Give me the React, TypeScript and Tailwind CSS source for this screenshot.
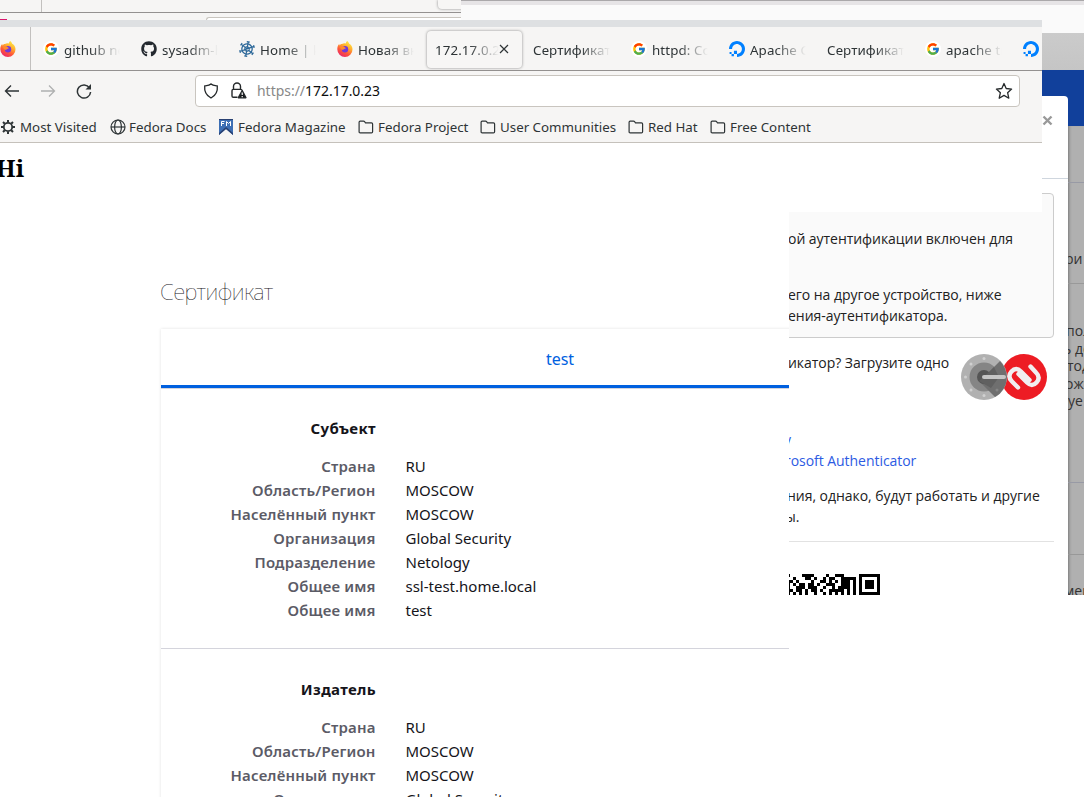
import React from 'react';
import { FaGithub } from 'react-icons/fa';
import { FcGoogle } from 'react-icons/fc';
import { SiDigitalocean } from 'react-icons/si';

const uiFont = "font-['Noto_Sans',sans-serif]";
const webFont = "font-['Open_Sans',sans-serif]";

function FirefoxIcon() {
  return (
    <svg width="16" height="16" viewBox="0 0 16 16" className="shrink-0">
      <defs>
        <linearGradient id="fx" x1="0.8" y1="0" x2="0.25" y2="1">
          <stop offset="0" stopColor="#fff04a" />
          <stop offset="0.35" stopColor="#ffb02e" />
          <stop offset="0.65" stopColor="#ff5a36" />
          <stop offset="1" stopColor="#e8206f" />
        </linearGradient>
      </defs>
      <path fill="url(#fx)" d="M10.3 0c1.2 1 1.6 1.9 1.9 2.8 1 .3 1.6 1 1.9 1.4.9 1.2 1.400 2.600 1.400 4.200A7.600 7.600 0 0 1 8 16 7.700 7.700 0 0 1 .3 8.300c0-2.100.6-3.800 1.900-5.200l.5 1.300C3.500 3.300 4.200 3 5 3.100c1.100-.9 2.600-1 3.900-.6C8.900 1.500 9.400.6 10.300 0z" />
      <circle cx="8" cy="8.300" r="3.200" fill="#7139d8" />
      <path fill="#ff8a2b" d="M3 5.500c1.500-.8 3.500-.4 4.500.6L9 7.200 7.200 8C6.500 9 5.500 8.400 5 8.900 4 8.400 3 7 3 5.500z" />
    </svg>
  );
}

function GoogleIcon() {
  return (
    <span className="flex size-4 shrink-0 items-center justify-center rounded-full bg-white">
      <FcGoogle size={14} />
    </span>
  );
}

function WheelIcon() {
  return (
    <svg width="16" height="16" viewBox="0 0 16 16" className="shrink-0" fill="none" stroke="#2d6899">
      <g transform="rotate(10 8 8)">
        <circle cx="8" cy="8" r="5.200" strokeWidth="1.300" />
        <circle cx="8" cy="8" r="2.300" strokeWidth="1" />
        <path strokeWidth="1.200" d="M8 .5v15M1.500 4.200l13 7.500M14.500 4.200l-13 7.500M6.500.8h3M6.500 15.200h3M1 5.500l1.200-2.500M15 5.500l-1.200-2.500M1 10.500l1.200 2.500M15 10.500l-1.200 2.500" />
      </g>
    </svg>
  );
}

function Folder() {
  return (
    <svg width="16" height="16" viewBox="0 0 16 16" className="shrink-0" fill="none" stroke="#2e3436" strokeWidth="1.200">
      <path d="M1.100 12.800V3.200q0-1.100 1.100-1.100h3.300q.7 0 1.100.6l.9 1.200h6q1.100 0 1.100 1.100v7.800q0 1.100-1.100 1.100H2.200q-1.100 0-1.100-1.100z" />
    </svg>
  );
}

type TabProps = { icon?: React.ReactNode; title: string };
function Tab({ icon, title }: TabProps) {
  return (
    <div className="flex h-10 w-[77px] shrink-0 items-center gap-[5px]">
      {icon}
      <span className="min-w-0 flex-1 overflow-hidden whitespace-nowrap pt-[3px] tracking-[0.1px] [mask-image:linear-gradient(to_left,transparent,black_30px)]">{title}</span>
    </div>
  );
}

function BrowserWindow() {
  return (
    <section className={`absolute left-0 top-5 flex h-[192px] w-[1042px] flex-col overflow-hidden bg-white text-[13.330px] text-[#2e3436] ${uiFont}`}>
      <div className="h-[7px] shrink-0 bg-[#dee0e2]" />
      <div className="flex h-11 shrink-0 border-b border-[#949190] bg-[#f6f5f4]">
        <div className="flex h-full w-[31px] shrink-0 items-center border-r border-[#c2c0be]"><FirefoxIcon /></div>
        <div className="flex min-w-0 items-center pt-[1px]">
          <div className="flex gap-[21px] pl-3">
            <Tab icon={<GoogleIcon />} title="github new" />
            <Tab icon={<FaGithub size={16} className="shrink-0 text-[#24292f]" />} title="sysadm-hw" />
            <Tab icon={<WheelIcon />} title="Home | kub" />
            <Tab icon={<FirefoxIcon />} title="Новая вкладка" />
          </div>
          <div className="ml-[13px] flex h-[37px] w-[95px] shrink-0 items-center rounded bg-[#f7f6f5] pl-[8px] shadow-[0_0_3px_#888]">
            <span className="w-[64px] overflow-hidden whitespace-nowrap pt-[3px] tracking-[0.1px] [mask-image:linear-gradient(to_left,transparent,black_30px)]">172.17.0.23/</span>
            <svg width="12" height="12" viewBox="0 0 12 12" className="-ml-px" stroke="#2e3436" strokeWidth="1.200"><path d="m2 2 8 8M10 2l-8 8" /></svg>
          </div>
          <div className="flex items-center gap-[21px] pl-[11px]">
            <Tab title="Сертификат д" />
            <Tab icon={<GoogleIcon />} title="httpd: Could" />
            <Tab icon={<SiDigitalocean size={16} className="shrink-0 text-[#0080ff]" />} title="Apache Con" />
            <Tab title="Сертификат д" />
            <Tab icon={<GoogleIcon />} title="apache trust" />
            <SiDigitalocean size={16} className="shrink-0 text-[#0080ff]" />
          </div>
        </div>
      </div>
      <div className="flex h-[72px] shrink-0 flex-col border-b border-[#c5c1bb] bg-[#f6f5f4]">
        <div className="flex h-10 items-center">
          <div className="flex w-[195px] shrink-0 gap-5 pl-1 pt-[1px]">
            <svg width="16" height="16" viewBox="0 0 16 16" fill="none" stroke="#2e3436" strokeWidth="1.400"><path d="M15 8H1.500M7 2.500 1.500 8 7 13.500" /></svg>
            <svg width="16" height="16" viewBox="0 0 16 16" fill="none" stroke="#afb0b0" strokeWidth="1.300"><path d="M1 8h13.500M9 2.500 14.500 8 9 13.500" /></svg>
            <svg width="16" height="16" viewBox="0 0 16 16" fill="none" stroke="#2e3436" strokeWidth="1.500"><path d="M13.500 4.800A6.600 6.600 0 1 0 14.600 9" /><path fill="#2e3436" stroke="none" d="M15 1v5.500H9.500z" /></svg>
          </div>
          <div className="flex h-8 w-[825px] items-center rounded border border-[#c9c5bf] bg-white px-[7px]">
            <svg width="16" height="16" viewBox="0 0 16 16" fill="none" stroke="#25292b" strokeWidth="1.300"><path d="M8 1C6.500 2.500 3.800 2.700 1.700 3c-.5 5 1.200 9.300 6.300 12 5.100-2.700 6.800-7 6.300-12C12.200 2.700 9.500 2.500 8 1z" /></svg>
            <svg width="17" height="17" viewBox="0 0 17 17" className="ml-[11px]" fill="none" stroke="#25292b" strokeWidth="1.400"><path d="M7.500 15.300H3.300q-1.300 0-1.300-1.300V8.700q0-1.300 1.300-1.300h7.400q1.300 0 1.300 1M3.500 7V4.500a3.500 3.500 0 0 1 7 0V7" /><path fill="#15181a" strokeWidth="1.400" strokeLinejoin="round" d="m12.200 8.700 3.700 7H8.400z" /><path stroke="#fff" strokeWidth="1.200" d="M12.200 10.500v2.500M12.200 14v1.200" /></svg>
            <span className="pl-[10px] pt-[1px] text-[13.950px] text-[#888]">https://<span className="text-[#0c0d0e]">172.17.0.23</span></span>
            <svg width="18" height="18" viewBox="0 0 18 18" className="ml-auto -mr-[1px]" fill="none" stroke="#25292b" strokeWidth="1.300" strokeLinejoin="round"><path d="m9 1.500 2.200 5 5.400.6-4 3.600 1.200 5.500L9 13.400l-4.800 2.800 1.200-5.500-4-3.600 5.400-.6z" /></svg>
          </div>
        </div>
        <div className="flex h-8 shrink-0 items-center whitespace-nowrap pt-px leading-4">
          <svg width="16" height="16" viewBox="0 0 16 16" className="mr-1 shrink-0" fill="none" stroke="#2e3436"><circle cx="8" cy="8" r="4.200" strokeWidth="1.800" /><path strokeWidth="2" d="M8 1v2.500M8 12.500V15M1 8h2.500M12.500 8H15M3 3l1.800 1.800M11.200 11.200 13 13M13 3l-1.800 1.800M4.800 11.200 3 13" /></svg>
          <span className="w-[90px]">Most Visited</span>
          <svg width="16" height="16" viewBox="0 0 16 16" className="mr-[3px] shrink-0" fill="none" stroke="#2e3436" strokeWidth="1.200"><circle cx="8" cy="8" r="7" /><ellipse cx="8" cy="8" rx="3.400" ry="7" /><path d="M1 8h14" /></svg>
          <span className="w-[89px]">Fedora Docs</span>
          <svg width="16" height="16" viewBox="0 0 16 16" className="mr-1 shrink-0"><path fill="#3c6eb4" d="M1 0h14v16l-7-6-7 6z" /><path fill="#294172" d="M1 0h14v1H1zM1 16v-2l7-6 7 6v2l-7-6z" /><path fill="none" stroke="#fff" d="M3.500 7V2.500h3M3.500 4.500h2.500M8.500 7V2.500l2 2 2-2V7" /></svg>
          <span className="w-[120px]">Fedora Magazine</span>
          <Folder /><span className="ml-1 w-[102px]">Fedora Project</span>
          <Folder /><span className="ml-1 w-[128px]">User Communities</span>
          <Folder /><span className="ml-1 w-[62px]">Red Hat</span>
          <Folder /><span className="ml-1">Free Content</span>
        </div>
      </div>
      <h1 className="-ml-[4px] mt-[8px] font-['Noto_Serif','Liberation_Serif',serif] text-[24px] font-bold leading-[33px] text-black">Hi</h1>
    </section>
  );
}

const subject: [string, string][] = [
  ['Страна', 'RU'],
  ['Область/Регион', 'MOSCOW'],
  ['Населённый пункт', 'MOSCOW'],
  ['Организация', 'Global Security'],
  ['Подразделение', 'Netology'],
  ['Общее имя', 'ssl-test.home.local'],
  ['Общее имя', 'test'],
];

function Group({ title, rows }: { title: string; rows: [string, string][] }) {
  return (
    <div className="shrink-0 border-b border-[#d4d4dc] pb-[26px] pt-[28px]">
      <h2 className="mb-[14px] w-[215px] text-right font-bold leading-6 tracking-[0.35px] text-[#15141a]">{title}</h2>
      {rows.map(([label, value], i) => (
        <div key={i} className="flex h-6 leading-6">
          <span className="w-[214.600px] shrink-0 text-right font-semibold tracking-[0.16px] text-[#5b5b66]">{label}</span>
          <span className="ml-[29.900px] text-[#15141a]">{value}</span>
        </div>
      ))}
    </div>
  );
}

function CertificateWindow() {
  return (
    <section className={`absolute left-0 top-[212px] flex h-[585px] w-[789px] flex-col overflow-hidden bg-white pl-[161px] text-[15px] ${uiFont}`}>
      <h1 className="-ml-px mt-[61px] h-9 shrink-0 text-[22px] font-[100] leading-9 tracking-[-0.45px] text-[#15141a]">Сертификат</h1>
      <div className="mt-[20px] flex w-[798px] shrink-0 flex-col shadow-[0_0_3px_rgba(0,0,0,0.12)]">
        <div className="flex h-[59px] w-full shrink-0 items-center justify-center border-b-[3px] border-[#0060df] pt-[3px] text-[16px] text-[#0061e0]">test</div>
        <div className="h-px bg-[#d4d4dc]" />
        <div className="-mt-px"><Group title="Субъект" rows={subject} /></div>
        <Group title="Издатель" rows={subject} />
      </div>
    </section>
  );
}

function BackWindow() {
  return (
    <section className="absolute left-0 top-0 flex h-5 w-[461px] flex-col overflow-hidden bg-[#f6f5f4]">
      <div className="flex h-[13px] shrink-0 border-b border-[#949190]">
        <div className="w-[42px] shrink-0 border-r border-[#c2c0be]" />
        <div className="ml-[396px] h-[9px] w-10 shrink-0 rounded-b bg-[#f7f6f5] shadow-[0_0_3px_#888]" />
      </div>
      <div className="flex h-[7px] shrink-0 items-end justify-between">
        <div className="h-px w-[7px] bg-[#d9186c]" />
        <div className="h-[3px] w-[255px] rounded-tl border-l border-t border-[#c9c5bf] bg-white" />
      </div>
    </section>
  );
}

const qrCells = [
  '....1111....1..111....',
  '.1...11.1..1.11..11111',
  '1.1....1..11.1.1.111.1',
  '.1.11.11.1..111..111.1',
  '..111.111..1..1.1111.1',
  '1.11.1.11.1..11111.1.1',
  '.1.1.1..1..1.1.1.1.1.1',
];

function QrCode() {
  return (
    <svg width="91" height="21" viewBox="0 0 91 21" className="block" shapeRendering="crispEdges">
      <path d="M0 0h1v3H0zM0 6h1v15H0z" />
      {qrCells.map((row, y) =>
        row.split('').map((c, x) => (c === '1' ? <rect key={`${x}-${y}`} x={1 + x * 3} y={y * 3} width="3" height="3" /> : null)),
      )}
      <path fillRule="evenodd" d="M70 0h21v21H70zM73 3v15h15V3zM76 6h9v9h-9z" />
    </svg>
  );
}

function AuthIcons() {
  return (
    <svg width="88" height="48" viewBox="0 0 88 48" className="shrink-0">
      <circle cx="65" cy="24" r="23" fill="#ed1c24" />
      <g fill="none" stroke="#f1eef0" strokeWidth="4.400" strokeLinecap="round" strokeLinejoin="round">
        <path d="M59 34.500 53 28.500Q48 23.500 52.500 18.500T62 18.500L70.500 27" />
        <path d="M71.500 13.500 77 19.500Q82 24.500 77.500 29.500T68 29.500L59.500 21" />
      </g>
      <circle cx="25" cy="24" r="23" fill="#b1b1b1" />
      <circle cx="25" cy="24" r="14.500" fill="#858585" />
      <path fill="#6f6f6f" d="M31 18 41 8q6 6 7 16-1 14-12 20L20 28z" />
      <circle cx="25" cy="24" r="7" fill="#555" />
      <path fill="#606060" d="m30 19 5-5 5 10-8 11-12-7z" />
      <path stroke="#c5c5c5" strokeWidth="4" strokeLinecap="round" d="M25 24h20" />
      <g fill="#d0d0d0"><circle cx="25" cy="5.500" r="1.500" /><circle cx="12" cy="11" r="1.500" /><circle cx="6.500" cy="24" r="1.500" /><circle cx="12" cy="37" r="1.500" /><circle cx="25" cy="42.500" r="1.500" /></g>
      <circle cx="38" cy="37" r="1.500" fill="#858585" />
    </svg>
  );
}

function SiteWindow() {
  return (
    <section className={`absolute left-[461px] top-0 flex h-[595px] w-[623px] flex-col overflow-hidden bg-white text-[14px] text-[#212121] ${webFont}`}>
      <div className="h-px shrink-0 bg-[#aaa8aa]" />
      <div className="h-1 shrink-0 bg-[#e6e4e6]" />
      <div className="h-7 shrink-0 bg-[#fafafa]" />
      <div className="h-[37px] shrink-0 bg-linear-to-b from-[#cbcbcb] to-[#c5c5c5]" />
      <div className="flex h-[56px] shrink-0 bg-[#11409b] pt-[26px]">
        <div className="flex w-[607px] justify-end rounded-tr bg-white pr-[14px] pt-[17px]">
          <svg width="13" height="14" viewBox="0 0 13 14" fill="none" stroke="#999" strokeWidth="2.400"><path d="m2.500 3.500 8 8M10.500 3.500l-8 8" /></svg>
        </div>
      </div>
      <div className="flex flex-1">
        <div className="flex w-[607px] flex-col bg-white pr-[14px] tracking-[-0.045px]">
          <div className="-mr-[14px] h-[53px] border-b border-[#cfd6de]" />
          <div className="mt-[14px] h-[145px] rounded-sm border border-[#ccc] bg-[#fafafa] pl-[326px] pt-[34px] leading-[21px]">
            <p className="whitespace-nowrap">ой аутентификации включен для</p>
            <p className="mt-[35px] whitespace-nowrap">его на другое устройство, ниже</p>
            <p className="whitespace-nowrap">ения-аутентификатора.</p>
          </div>
          <div className="flex h-[204px] border-b border-[#e2e2e2] pl-[327px]">
            <div className="flex flex-1 flex-col pt-[14px] leading-[21px]">
              <p className="whitespace-nowrap">икатор? Загрузите одно</p>
              <p className="-ml-1 mt-[56px] text-[#2d5be3]">y</p>
              <p className="-ml-[3px] whitespace-nowrap text-[#2d5be3]">rosoft Authenticator</p>
              <p className="-ml-px mt-[14px] w-0 whitespace-nowrap">ния, однако, будут работать и другие</p>
              <p className="-ml-[3px] whitespace-nowrap">ы.</p>
            </div>
            <div className="mr-[7px] shrink-0 pt-[15px]"><AuthIcons /></div>
          </div>
          <div className="pl-[328px] pt-8"><QrCode /></div>
        </div>
        <div className="flex w-4 flex-col overflow-hidden bg-[#b0b0b0] text-[#333] shadow-[inset_3px_0_3px_-2px_#777]">
          <div className="h-[57px] shrink-0 border-b border-[#989aa5]" />
          <div className="h-[101px] shrink-0 border-b border-[#999] pt-[65px]"><p className="-ml-[3px]">ри</p></div>
          <div className="h-[199px] shrink-0 whitespace-nowrap border-b border-[#989aa5] pt-[38px] leading-[17.500px]">
            <p className="-ml-[2px]">пол</p><p className="-ml-[5px]">ь до</p><p className="-ml-[1px]">тод</p><p className="-ml-[3px]">ож</p><p>уе</p>
          </div>
          <div className="h-[72px] shrink-0 border-b border-[#989898]" />
          <p className="-ml-[4px] mt-[26px] leading-5">мер</p>
        </div>
      </div>
    </section>
  );
}

export default function App() {
  return (
    <main className="relative h-[797px] w-[1084px] overflow-hidden bg-white">
      <SiteWindow />
      <BackWindow />
      <CertificateWindow />
      <BrowserWindow />
    </main>
  );
}
